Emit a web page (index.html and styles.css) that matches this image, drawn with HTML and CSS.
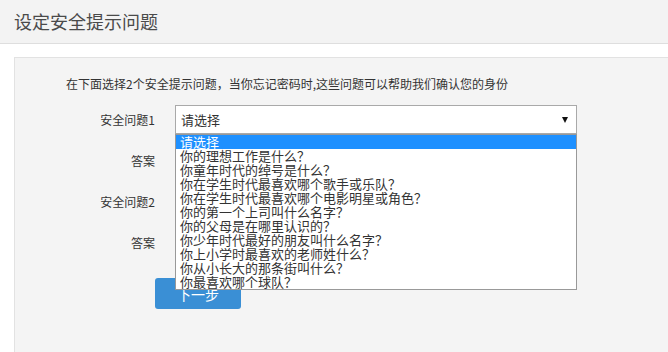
FILE: index.html
```html
<!DOCTYPE html>
<html lang="zh-CN">
<head>
    <meta charset="UTF-8">
    <title>设定安全提示问题</title>
    <link rel="stylesheet" href="styles.css">
</head>
<body>
<div class="page-head">
    <h1>设定安全提示问题</h1>
</div>
<div class="main">
    <div class="panel">
        <p class="intro">在下面选择2个安全提示问题，当你忘记密码时,这些问题可以帮助我们确认您的身份</p>
        <div class="form">
            <div class="row">
                <label>安全问题1</label>
                <div class="select-wrap">
                    <div class="select">
                        <span>请选择</span>
                        <i class="arrow"></i>
                    </div>
                    <ul class="options">
                        <li class="active">请选择</li>
                        <li>你的理想工作是什么？</li>
                        <li>你童年时代的绰号是什么？</li>
                        <li>你在学生时代最喜欢哪个歌手或乐队？</li>
                        <li>你在学生时代最喜欢哪个电影明星或角色？</li>
                        <li>你的第一个上司叫什么名字？</li>
                        <li>你的父母是在哪里认识的？</li>
                        <li>你少年时代最好的朋友叫什么名字？</li>
                        <li>你上小学时最喜欢的老师姓什么？</li>
                        <li>你从小长大的那条街叫什么？</li>
                        <li>你最喜欢哪个球队？</li>
                    </ul>
                </div>
            </div>
            <div class="row">
                <label>答案</label>
                <input type="text" class="input">
            </div>
            <div class="row">
                <label>安全问题2</label>
                <div class="select">
                    <span>请选择</span>
                    <i class="arrow"></i>
                </div>
            </div>
            <div class="row">
                <label>答案</label>
                <input type="text" class="input">
            </div>
            <button class="btn-next">下一步</button>
        </div>
    </div>
</div>
</body>
</html>
```

FILE: styles.css
```css
body {
    margin: 0;
    font-family: "Noto Sans CJK SC", "Liberation Sans", sans-serif;
    color: #333;
    background-color: #fff;
    overflow: hidden;
}

.page-head {
    background-color: #f3f3f3;
    border-bottom: 1px solid #dedede;
    height: 43px;
}

.page-head h1 {
    margin: 0;
    padding-left: 14px;
    font-size: 18px;
    font-weight: normal;
    line-height: 42px;
    color: #4a4a4a;
}

.main {
    padding: 13px 0 0 14px;
}

.panel {
    background-color: #f4f4f4;
    border: 1px solid #e2e2e2;
    border-right: none;
    border-bottom: none;
    height: 276px;
    padding: 18px 0 0 0;
}

.intro {
    margin: 0 0 13px 51px;
    font-size: 12px;
    line-height: 16px;
}

.row {
    display: flex;
    align-items: center;
    gap: 20px;
    height: 29px;
    margin-bottom: 12px;
}

.row label {
    width: 140px;
    text-align: right;
    font-size: 12px;
}

.select-wrap {
    position: relative;
}

.select {
    display: flex;
    align-items: center;
    justify-content: space-between;
    box-sizing: border-box;
    width: 402px;
    height: 29px;
    padding: 0 6px 0 5px;
    background-color: #fff;
    border: 1px solid #a9a9a9;
    font-size: 13px;
}

.arrow {
    width: 0;
    height: 0;
    border-left: 3px solid transparent;
    border-right: 3px solid transparent;
    border-top: 6px solid #111;
    margin-right: 2px;
}

.input {
    box-sizing: border-box;
    width: 402px;
    height: 29px;
    border: 1px solid #ccc;
    background-color: #fff;
}

.options {
    position: absolute;
    top: 29px;
    left: 0;
    z-index: 10;
    box-sizing: border-box;
    width: 402px;
    margin: 0;
    padding: 0;
    list-style: none;
    background-color: #fff;
    border: 1px solid #999;
}

.options li {
    padding-left: 4px;
    font-size: 13px;
    line-height: 14px;
    height: 14px;
    color: #333;
    white-space: nowrap;
}

.options li.active {
    background-color: #1e90ff;
    color: #fff;
}

.btn-next {
    margin: 9px 0 0 140px;
    width: 86px;
    height: 31px;
    border: none;
    border-radius: 3px;
    background-color: #3a8fd5;
    color: #fff;
    font-family: inherit;
    font-size: 14px;
}
```
